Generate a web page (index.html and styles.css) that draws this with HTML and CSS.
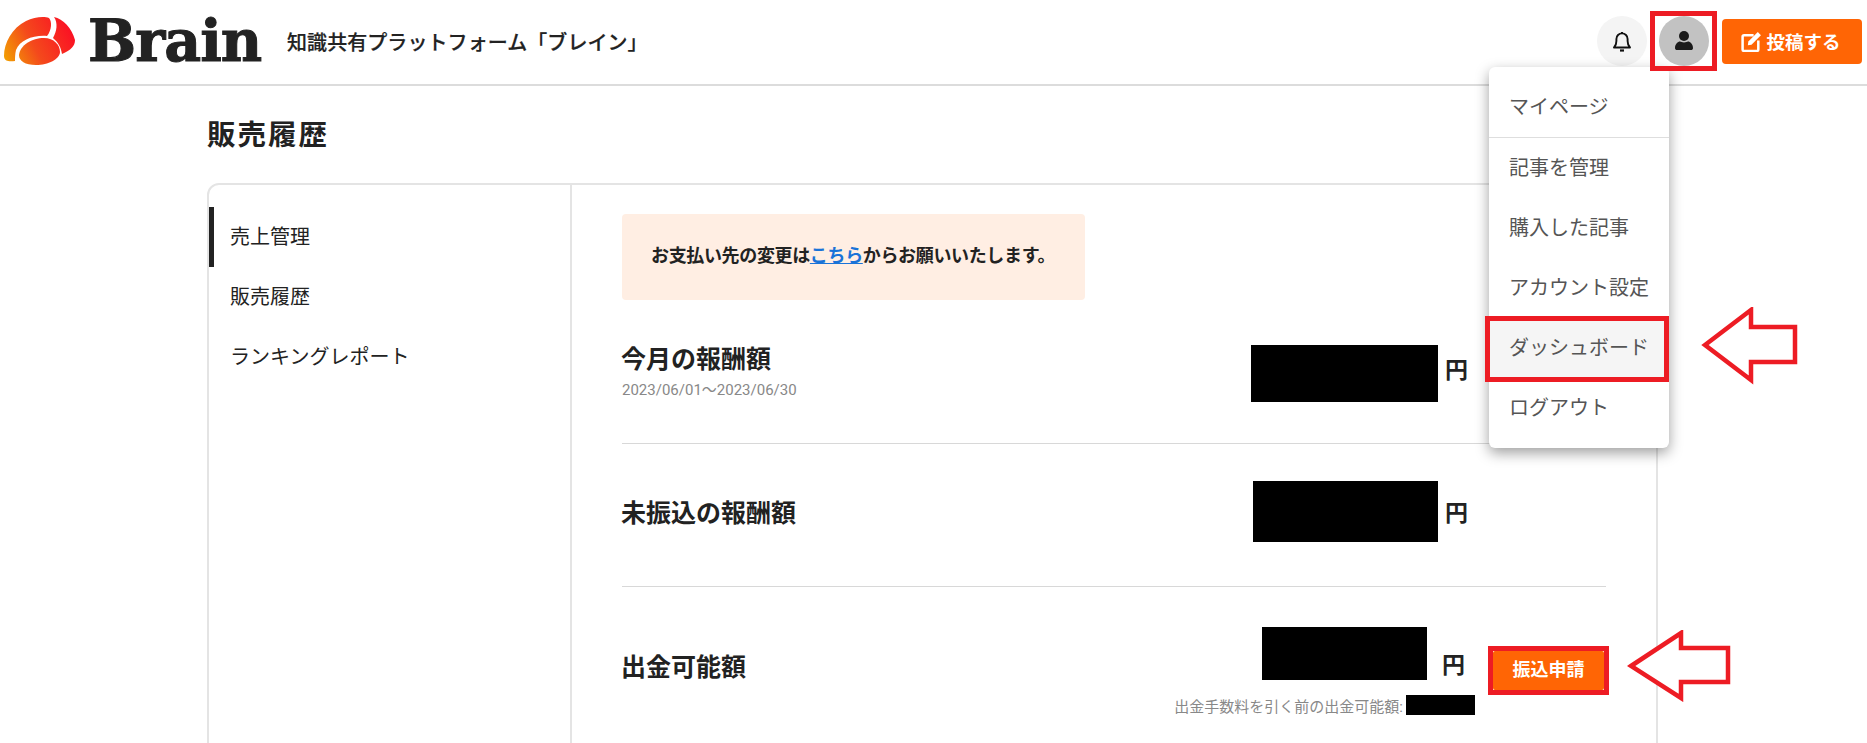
FILE: index.html
```html
<!DOCTYPE html>
<html lang="ja">
<head>
<meta charset="utf-8">
<title>販売履歴</title>
<link rel="stylesheet" href="styles.css">
</head>
<body>
<header class="header">
  <div class="brand">
    <svg class="logo-mark" width="76" height="50" viewBox="3 17 76 50" aria-hidden="true">
      <defs>
        <linearGradient id="g" gradientUnits="userSpaceOnUse" x1="4" y1="66" x2="74" y2="30">
          <stop offset="0" stop-color="#f2a800"/>
          <stop offset=".45" stop-color="#f4491c"/>
          <stop offset="1" stop-color="#fb0d24"/>
        </linearGradient>
      </defs>
      <path fill="url(#g)" d="M4 57C4 44 12 29 26 22C34 18 44 17 49 19C52 22 52 31 47 37C33 36 20 41 16 51C15 55 15 59 15 62C9 63 4 62 4 57Z"/>
      <path fill="url(#g)" d="M54 18C63 20 72 29 75 41C75 47 71 51 62 55C61 49 59 44 53 39C57 32 58 24 54 18Z"/>
      <path fill="url(#g)" d="M19 56C20 46 32 39 44 39C54 39 60 46 60 53C60 60 48 66 36 66C25 66 19 62 19 56Z"/>
    </svg>
    <span class="logo-text">Brain</span>
    <span class="tagline">知識共有プラットフォーム「ブレイン」</span>
  </div>
  <div class="header-actions">
    <button class="icon-btn bell" aria-label="通知">
      <svg width="22" height="24" viewBox="0 0 22 24" fill="none" stroke="#111" stroke-width="1.9" stroke-linejoin="round">
        <path d="M3 18.500h16c-1.700-1.700-2.400-3.300-2.400-6.500v-2a5.600 5.600 0 0 0-11.200 0v2c0 3.200-.7 4.800-2.400 6.500Z"/>
        <path d="M9 21.500h4" stroke-width="2.200"/>
        <path d="M11 3v1.500" stroke-width="2"/>
      </svg>
    </button>
    <button class="icon-btn avatar" aria-label="アカウント">
      <svg width="18" height="20" viewBox="0 0 18 20" fill="#1a1a1a">
        <circle cx="9" cy="5" r="5"/>
        <path d="M0 17c0-4 3-6.500 5-6.500 1 0 2 .9 4 .9s3-.9 4-.9c2 0 5 2.500 5 6.500 0 1.500-1 2-2 2H2c-1 0-2-.5-2-2Z"/>
      </svg>
    </button>
    <button class="post-btn">
      <svg width="20" height="21" viewBox="0 0 20 21" fill="none" aria-hidden="true">
        <path d="M12 5H3a1.500 1.500 0 0 0-1.500 1.500v12A1.500 1.500 0 0 0 3 20h12a1.500 1.500 0 0 0 1.500-1.500V10" stroke="#fff" stroke-width="2.400"/>
        <path d="M7 11L16 2l3 3-9 9-3.500.5Z" fill="#fff"/>
      </svg>
      <span>投稿する</span>
    </button>
  </div>
</header>

<main class="page">
  <h1 class="page-title">販売履歴</h1>
  <section class="card">
    <nav class="side">
      <a class="side-item active">売上管理</a>
      <a class="side-item">販売履歴</a>
      <a class="side-item">ランキングレポート</a>
    </nav>
    <div class="content">
      <p class="notice">お支払い先の変更は<a class="notice-link">こちら</a>からお願いいたします。</p>

      <div class="row row-month">
        <div class="label">
          <h2 class="row-title">今月の報酬額</h2>
          <p class="row-date">2023/06/01～2023/06/30</p>
        </div>
        <div class="amount amount-month">
          <span class="redact redact-month"></span>
          <span class="yen">円</span>
        </div>
      </div>

      <div class="row row-unpaid">
        <h2 class="row-title">未振込の報酬額</h2>
        <div class="amount amount-unpaid">
          <span class="redact redact-unpaid"></span>
          <span class="yen">円</span>
        </div>
      </div>

      <div class="row row-withdraw">
        <h2 class="row-title withdraw-title">出金可能額</h2>
        <div class="withdraw-right">
          <div class="withdraw-col">
            <div class="amount amount-withdraw">
              <span class="redact redact-withdraw"></span>
              <span class="yen">円</span>
            </div>
            <p class="fee">出金手数料を引く前の出金可能額: <span class="redact redact-fee"></span></p>
          </div>
          <button class="transfer-btn">振込申請</button>
        </div>
      </div>
    </div>
  </section>
</main>

<div class="menu">
  <a class="menu-item menu-first">マイページ</a>
  <a class="menu-item">記事を管理</a>
  <a class="menu-item">購入した記事</a>
  <a class="menu-item">アカウント設定</a>
  <a class="menu-item menu-hover">ダッシュボード</a>
  <a class="menu-item">ログアウト</a>
</div>

<div class="mark mark-avatar"></div>
<div class="mark mark-dash"></div>
<div class="mark mark-transfer"></div>

<svg class="arrow arrow-dash" width="100" height="78" viewBox="0 0 100 78" fill="#fff" stroke="#ed1c24" stroke-width="4.500" stroke-linejoin="miter">
  <path d="M4 38L50 3V20H94V55H50V73Z"/>
</svg>
<svg class="arrow arrow-transfer" width="106" height="72" viewBox="0 0 106 72" fill="#fff" stroke="#ed1c24" stroke-width="4.500">
  <path d="M4 36L54 3V18H101V52H54V68Z"/>
</svg>
</body>
</html>
```

FILE: styles.css
```css
* { box-sizing: border-box; }
html, body { margin: 0; padding: 0; height: 743px; overflow: hidden; background: #fff; }
body {
  position: relative;
  font-family: Roboto, "Noto Sans CJK JP", "Noto Sans", sans-serif;
  color: #222;
}
h1, h2, p { margin: 0; }
button { border: 0; padding: 0; font: inherit; cursor: pointer; }

.header {
  height: 86px;
  border-bottom: 2px solid #dcdcdc;
  display: flex;
  align-items: center;
  justify-content: space-between;
  padding: 0 5px 2px 3px;
}
.brand { display: flex; align-items: center; }
.logo-mark { display: block; }
.logo-text {
  margin-left: 9px;
  font-family: "DejaVu Serif", serif;
  font-weight: 700;
  font-size: 57px;
  line-height: 60px;
  letter-spacing: -1px;
  -webkit-text-stroke: 1px #222;
  color: #222;
  width: 199px;
}
.tagline { font-size: 20px; font-weight: 500; letter-spacing: .07px; color: #222; -webkit-text-stroke: .2px #222; }

.header-actions { display: flex; align-items: center; }
.icon-btn {
  width: 50px;
  height: 50px;
  border-radius: 50%;
  display: flex;
  align-items: center;
  justify-content: center;
}
.bell { background: #f4f4f4; margin-right: 12px; }
.avatar { background: #c2c2c2; margin-right: 13px; }
.post-btn {
  width: 140px;
  height: 45px;
  border-radius: 4px;
  background: #ff6505;
  color: #fff;
  font-size: 18.500px;
  font-weight: 700;
  display: flex;
  align-items: center;
  justify-content: center;
  gap: 4px;
}
.post-btn svg { width: 21px; height: 22px; margin-left: -2px; }

.page { margin-left: 207px; width: 1451px; }
.page-title { font-size: 28.500px; line-height: 40px; font-weight: 700; letter-spacing: 2px; padding-top: 30px; box-sizing: content-box; }
.card {
  margin-top: 27px;
  height: 800px;
  border: 2px solid #e4e4e4;
  border-radius: 12px;
  display: flex;
}
.side {
  width: 363px;
  border-right: 2px solid #e4e4e4;
  padding-top: 22px;
  display: flex;
  flex-direction: column;
}
.side-item {
  height: 60px;
  padding-left: 16px;
  font-size: 20px;
  line-height: 60px;
  color: #222;
  border-left: 5px solid transparent;
}
.side-item.active { border-left-color: #222; }

.content { flex: 1; padding: 29px 50px 0 50px; }
.notice {
  width: 463px;
  height: 86px;
  background: #ffeee3;
  border-radius: 4px;
  padding-left: 29px;
  font-size: 18px;
  line-height: 84px;
  font-weight: 700;
  letter-spacing: -.35px;
}
.notice-link { color: #1a73d8; text-decoration: underline; }

.row { display: flex; border-bottom: 1px solid #d8d8d8; }
.row-title { font-size: 25px; line-height: 30px; font-weight: 700; color: #222; margin-left: -1px; }
.row-date { font-size: 15px; line-height: 30px; color: #888; }
.amount { display: flex; align-items: center; }
.yen { font-size: 23px; font-weight: 700; line-height: 30px; color: #222; }
.redact { display: block; background: #000; }

.row-month { margin-top: 30px; height: 114px; padding-top: 15px; }
.amount-month { margin-left: auto; margin-right: 138px; align-items: flex-start; }
.redact-month { width: 187px; height: 57px; margin-right: 7px; }
.amount-month .yen { margin-top: 11px; }

.row-unpaid { height: 143px; padding-top: 37px; }
.row-unpaid .row-title { margin-top: 18px; }
.amount-unpaid { margin-left: auto; margin-right: 138px; align-items: flex-start; }
.redact-unpaid { width: 185px; height: 61px; margin-right: 7px; }
.amount-unpaid .yen { margin-top: 18px; }

.row-withdraw { border-bottom: 0; padding-top: 40px; }
.withdraw-title { margin-top: 26px; }
.withdraw-right { margin-left: auto; display: flex; align-items: flex-start; margin-right: 2px; }
.withdraw-col { display: flex; flex-direction: column; align-items: flex-end; }
.amount-withdraw { margin-right: 10px; align-items: flex-start; }
.redact-withdraw { width: 165px; height: 53px; margin-right: 15px; }
.amount-withdraw .yen { margin-top: 24px; }
.fee {
  display: flex;
  align-items: center;
  margin-top: 14px;
  height: 20px;
  font-size: 15px;
  color: #888;
  white-space: nowrap;
}
.redact-fee { width: 69px; height: 20px; margin-left: 3px; }
.transfer-btn {
  margin: 24px 0 0 18px;
  width: 111px;
  height: 39px;
  padding-bottom: 5px;
  background: #ff6505;
  color: #fff;
  font-size: 18px;
  font-weight: 700;
  border-radius: 2px;
}

.menu {
  position: absolute;
  left: 1489px;
  top: 67px;
  width: 180px;
  height: 381px;
  padding: 10px 0;
  background: #fff;
  border-radius: 6px;
  box-shadow: 0 5px 14px rgba(0, 0, 0, .38);
}
.menu-item {
  display: block;
  height: 60px;
  padding-left: 20px;
  font-size: 20px;
  line-height: 60px;
  color: #555;
}
.menu-first { height: 61px; border-bottom: 1px solid #dedede; }
.menu-hover { background: #f5f5f5; }

.mark { position: absolute; border: 5px solid #ed1c24; }
.mark-avatar { left: 1650px; top: 11px; width: 67px; height: 60px; }
.mark-dash { left: 1485px; top: 316px; width: 184px; height: 66px; }
.mark-transfer { left: 1488px; top: 646px; width: 121px; height: 49px; }

.arrow { position: absolute; display: block; }
.arrow-dash { left: 1701px; top: 307px; }
.arrow-transfer { left: 1627px; top: 630px; }
```
